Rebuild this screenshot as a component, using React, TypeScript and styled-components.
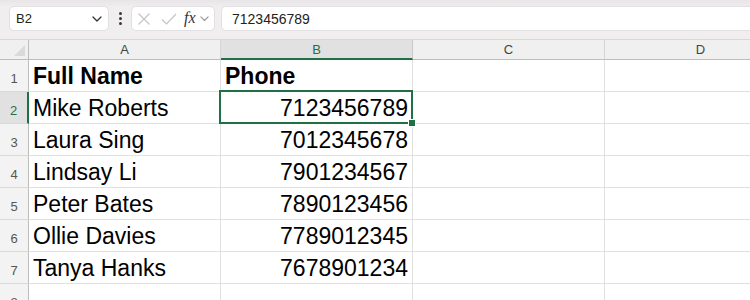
import styled, { createGlobalStyle } from 'styled-components';

const GlobalStyle = createGlobalStyle`
  html, body {
    margin: 0;
    padding: 0;
    background: #ffffff;
    overflow: hidden;
  }
  body {
    font-family: "Liberation Sans", Arial, sans-serif;
  }
`;

const GREEN = '#1e7145';
const GRID = '#e1e1e1';

const Page = styled.div`
  width: 750px;
  height: 300px;
  overflow: hidden;
  background: #fff;
`;

const Toolbar = styled.div`
  display: flex;
  align-items: center;
  height: 40px;
  padding: 0 0 2px 9px;
  box-sizing: border-box;
  background: linear-gradient(#e7e5e7 0px, #f0eeef 7px, #f1eeee 100%);
  border-bottom: 1px solid #dad7d7;
`;

const Box = styled.div<{ $width?: number }>`
  height: 25px;
  box-sizing: border-box;
  background: #fff;
  border: 1px solid #e2e0e2;
  border-radius: 5px;
  display: flex;
  align-items: center;
  width: ${p => (p.$width ? `${p.$width}px` : 'auto')};
`;

const NameBox = styled(Box)`
  justify-content: space-between;
  padding: 0 6px 0 6px;
  font-size: 13px;
  color: #222;
`;

const Dots = styled.div`
  width: 22px;
  display: flex;
  flex-direction: column;
  align-items: center;
  gap: 2px;
  span {
    width: 3px;
    height: 3px;
    background: #3a3a3a;
    border-radius: 50%;
  }
`;

const FuncBox = styled(Box)`
  padding: 0 3px 0 5px;
  gap: 4px;
`;

const Fx = styled.span`
  font-family: "Liberation Serif", "Times New Roman", serif;
  font-style: italic;
  font-size: 16px;
  color: #333;
  margin-left: 3px;
  line-height: 1;
  padding-bottom: 2px;
`;

const Formula = styled(Box)`
  flex: 1;
  margin-left: 6px;
  margin-right: -12px;
  padding-left: 10px;
  font-size: 14px;
  color: #222;
`;

const Sheet = styled.div`
  display: grid;
  grid-template-columns: 29px 192px 192px 192px 192px;
  grid-template-rows: 20px repeat(8, 32px);
`;

const Corner = styled.div`
  background: #f0f0f0;
  border-right: 1px solid #bdbdbd;
  border-bottom: 1px solid #bdbdbd;
  position: relative;
  &::after {
    content: '';
    position: absolute;
    right: 3px;
    bottom: 3px;
    width: 0;
    height: 0;
    border-left: 11px solid transparent;
    border-bottom: 11px solid #dadada;
  }
`;

const ColHead = styled.div<{ $active?: boolean }>`
  background: ${p => (p.$active ? '#e1e1e1' : '#f0f0f0')};
  color: ${p => (p.$active ? GREEN : '#444')};
  border-right: 1px solid ${p => (p.$active ? '#c8c8c8' : '#d6d6d6')};
  border-bottom: ${p => (p.$active ? `2px solid ${GREEN}` : '1px solid #bdbdbd')};
  font-size: 13px;
  display: flex;
  align-items: center;
  justify-content: center;
  box-sizing: border-box;
`;

const RowHead = styled.div<{ $active?: boolean }>`
  background: ${p => (p.$active ? '#e1e1e1' : '#f3f3f3')};
  color: ${p => (p.$active ? GREEN : '#555')};
  border-right: ${p => (p.$active ? `2px solid ${GREEN}` : '1px solid #bdbdbd')};
  border-bottom: 1px solid #dadada;
  font-size: 13px;
  display: flex;
  align-items: flex-end;
  justify-content: center;
  padding-bottom: 5px;
  box-sizing: border-box;
`;

const Cell = styled.div<{ $bold?: boolean; $right?: boolean }>`
  border-right: 1px solid ${GRID};
  border-bottom: 1px solid ${GRID};
  box-sizing: border-box;
  display: flex;
  align-items: flex-end;
  justify-content: ${p => (p.$right ? 'flex-end' : 'flex-start')};
  padding: 0 4px 3px 4px;
  font-size: 23px;
  font-weight: ${p => (p.$bold ? 700 : 400)};
  color: #000;
  white-space: nowrap;
  line-height: 1;
`;

const SelectedCell = styled(Cell)`
  position: relative;
  &::before {
    content: '';
    position: absolute;
    left: -2px;
    top: -2px;
    right: -1px;
    bottom: -1px;
    border: 2px solid ${GREEN};
    pointer-events: none;
  }
`;

const FillHandle = styled.span`
  position: absolute;
  right: -4px;
  bottom: -4px;
  width: 6px;
  height: 6px;
  background: ${GREEN};
  border: 1px solid #fff;
  z-index: 2;
`;

const people = [
  ['Mike Roberts', '7123456789'],
  ['Laura Sing', '7012345678'],
  ['Lindsay Li', '7901234567'],
  ['Peter Bates', '7890123456'],
  ['Ollie Davies', '7789012345'],
  ['Tanya Hanks', '7678901234'],
];

const Chevron = ({ color = '#333', size = 10 }: { color?: string; size?: number }) => (
  <svg width={size} height={size * 0.6} viewBox="0 0 10 6" fill="none">
    <path d="M1 1l4 4 4-4" stroke={color} strokeWidth="1.3" strokeLinecap="round" strokeLinejoin="round" />
  </svg>
);

export default function App() {
  return (
    <Page>
      <GlobalStyle />
      <Toolbar>
        <NameBox $width={100}>
          <span>B2</span>
          <Chevron />
        </NameBox>
        <Dots>
          <span />
          <span />
          <span />
        </Dots>
        <FuncBox $width={84}>
          <svg width="14" height="14" viewBox="0 0 14 14" fill="none">
            <path d="M1.5 1.5l11 11M12.5 1.5l-11 11" stroke="#c4c4c4" strokeWidth="1.2" />
          </svg>
          <svg width="16" height="14" viewBox="0 0 16 14" fill="none" style={{ marginLeft: 6 }}>
            <path d="M1 7.5l4.5 4.5L15 2" stroke="#c4c4c4" strokeWidth="1.2" />
          </svg>
          <Fx>fx</Fx>
          <Chevron color="#999" size={9} />
        </FuncBox>
        <Formula>7123456789</Formula>
      </Toolbar>
      <Sheet>
        <Corner />
        <ColHead>A</ColHead>
        <ColHead $active>B</ColHead>
        <ColHead>C</ColHead>
        <ColHead>D</ColHead>

        <RowHead>1</RowHead>
        <Cell $bold>Full Name</Cell>
        <Cell $bold>Phone</Cell>
        <Cell />
        <Cell />

        {people.map(([name, phone], i) => (
          <>
            <RowHead key={`h${i}`} $active={i === 0}>{i + 2}</RowHead>
            <Cell key={`n${i}`}>{name}</Cell>
            {i === 0 ? (
              <SelectedCell key={`p${i}`} $right>
                {phone}
                <FillHandle />
              </SelectedCell>
            ) : (
              <Cell key={`p${i}`} $right>{phone}</Cell>
            )}
            <Cell key={`c${i}`} />
            <Cell key={`d${i}`} />
          </>
        ))}

        <RowHead>8</RowHead>
        <Cell />
        <Cell />
        <Cell />
        <Cell />
      </Sheet>
    </Page>
  );
}
